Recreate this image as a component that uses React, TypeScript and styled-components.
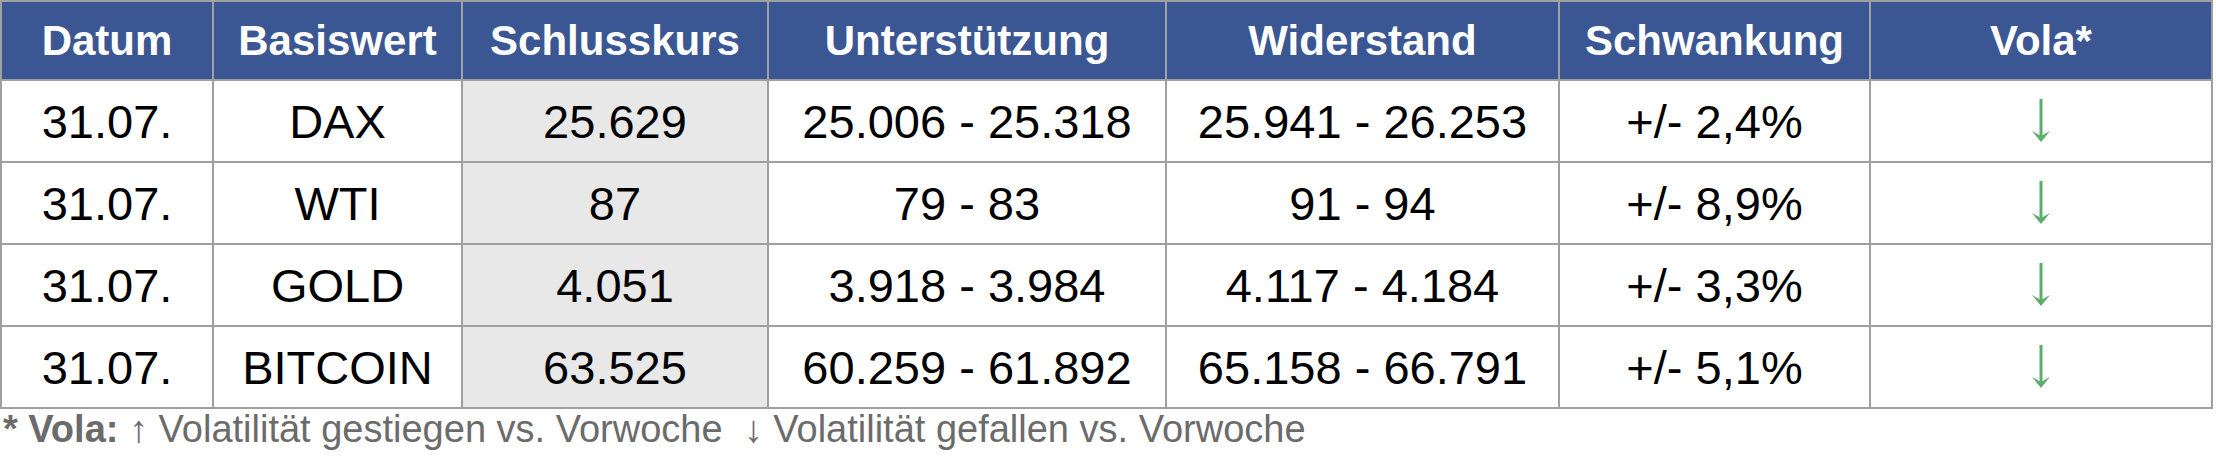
import React from 'react';
import styled, { createGlobalStyle } from 'styled-components';

const GlobalStyle = createGlobalStyle`
    html, body {
        margin: 0;
        padding: 0;
        background: #fff;
    }
    body {
        font-family: 'Liberation Sans', Arial, sans-serif;
    }
`

const Wrapper = styled.div`
    width: 2216px;
    height: 462px;
    overflow: hidden;
`

const Table = styled.table`
    border-collapse: collapse;
    table-layout: fixed;
    width: 2212px;
    font-family: 'Liberation Sans', Arial, sans-serif;
`

const HeadCell = styled.th`
    height: 77px;
    padding: 0;
    background-color: #3a5693;
    color: #fff;
    font-size: 42px;
    font-weight: 700;
    text-align: center;
    vertical-align: middle;
    border: 2px solid #a0a0a0;
`

const Cell = styled.td<{ $shaded?: boolean }>`
    height: 80px;
    padding: 0;
    background-color: ${({ $shaded }) => ($shaded ? '#e8e8e8' : '#fff')};
    color: #000;
    font-size: 47px;
    text-align: center;
    vertical-align: middle;
    border: 2px solid #a0a0a0;
`

const ArrowWrap = styled.span`
    display: inline-flex;
    padding-top: 10px;
`

const Footnote = styled.div`
    padding: 0 0 0 3px;
    font-size: 38px;
    line-height: 1.1;
    color: #6b6b6b;
    white-space: nowrap;
`

const FootLabel = styled.b`
    font-weight: 700;
`

const FootArrow = styled.span`
    font-family: 'Liberation Sans', 'DejaVu Sans', sans-serif;
    font-variant-emoji: text;
    color: #6b6b6b;
`

const DownArrow: React.FC = () => (
    <svg width="20" height="43" viewBox="0 0 20 43">
        <line x1="10" y1="0" x2="10" y2="38" stroke="#5aae68" strokeWidth="3" />
        <path d="M1 32 L10 43 L19 32 L10 37 Z" fill="#5aae68" />
    </svg>
)

const columns = [212, 249, 306, 398, 393, 311, 342];
const headers = ['Datum', 'Basiswert', 'Schlusskurs', 'Unterstützung', 'Widerstand', 'Schwankung', 'Vola*'];

type Row = {
    date: string;
    name: string;
    close: string;
    support: string;
    resistance: string;
    range: string;
}

const rows: Row[] = [
    { date: '31.07.', name: 'DAX', close: '25.629', support: '25.006 - 25.318', resistance: '25.941 - 26.253', range: '+/- 2,4%' },
    { date: '31.07.', name: 'WTI', close: '87', support: '79 - 83', resistance: '91 - 94', range: '+/- 8,9%' },
    { date: '31.07.', name: 'GOLD', close: '4.051', support: '3.918 - 3.984', resistance: '4.117 - 4.184', range: '+/- 3,3%' },
    { date: '31.07.', name: 'BITCOIN', close: '63.525', support: '60.259 - 61.892', resistance: '65.158 - 66.791', range: '+/- 5,1%' },
];

const App: React.FC = () => {
    return (
        <Wrapper>
            <GlobalStyle />
            <Table>
                <colgroup>
                    {columns.map((w, i) => <col key={i} style={{ width: w }} />)}
                </colgroup>
                <thead>
                    <tr>
                        {headers.map(h => <HeadCell key={h}>{h}</HeadCell>)}
                    </tr>
                </thead>
                <tbody>
                    {rows.map(r => (
                        <tr key={r.name}>
                            <Cell>{r.date}</Cell>
                            <Cell>{r.name}</Cell>
                            <Cell $shaded>{r.close}</Cell>
                            <Cell>{r.support}</Cell>
                            <Cell>{r.resistance}</Cell>
                            <Cell>{r.range}</Cell>
                            <Cell>
                                <ArrowWrap><DownArrow /></ArrowWrap>
                            </Cell>
                        </tr>
                    ))}
                </tbody>
            </Table>
            <Footnote>
                <FootLabel>* Vola:</FootLabel> <FootArrow>↑</FootArrow> Volatilität gestiegen vs. Vorwoche&nbsp; <FootArrow>↓</FootArrow> Volatilität gefallen vs. Vorwoche
            </Footnote>
        </Wrapper>
    )
}

export default App;
